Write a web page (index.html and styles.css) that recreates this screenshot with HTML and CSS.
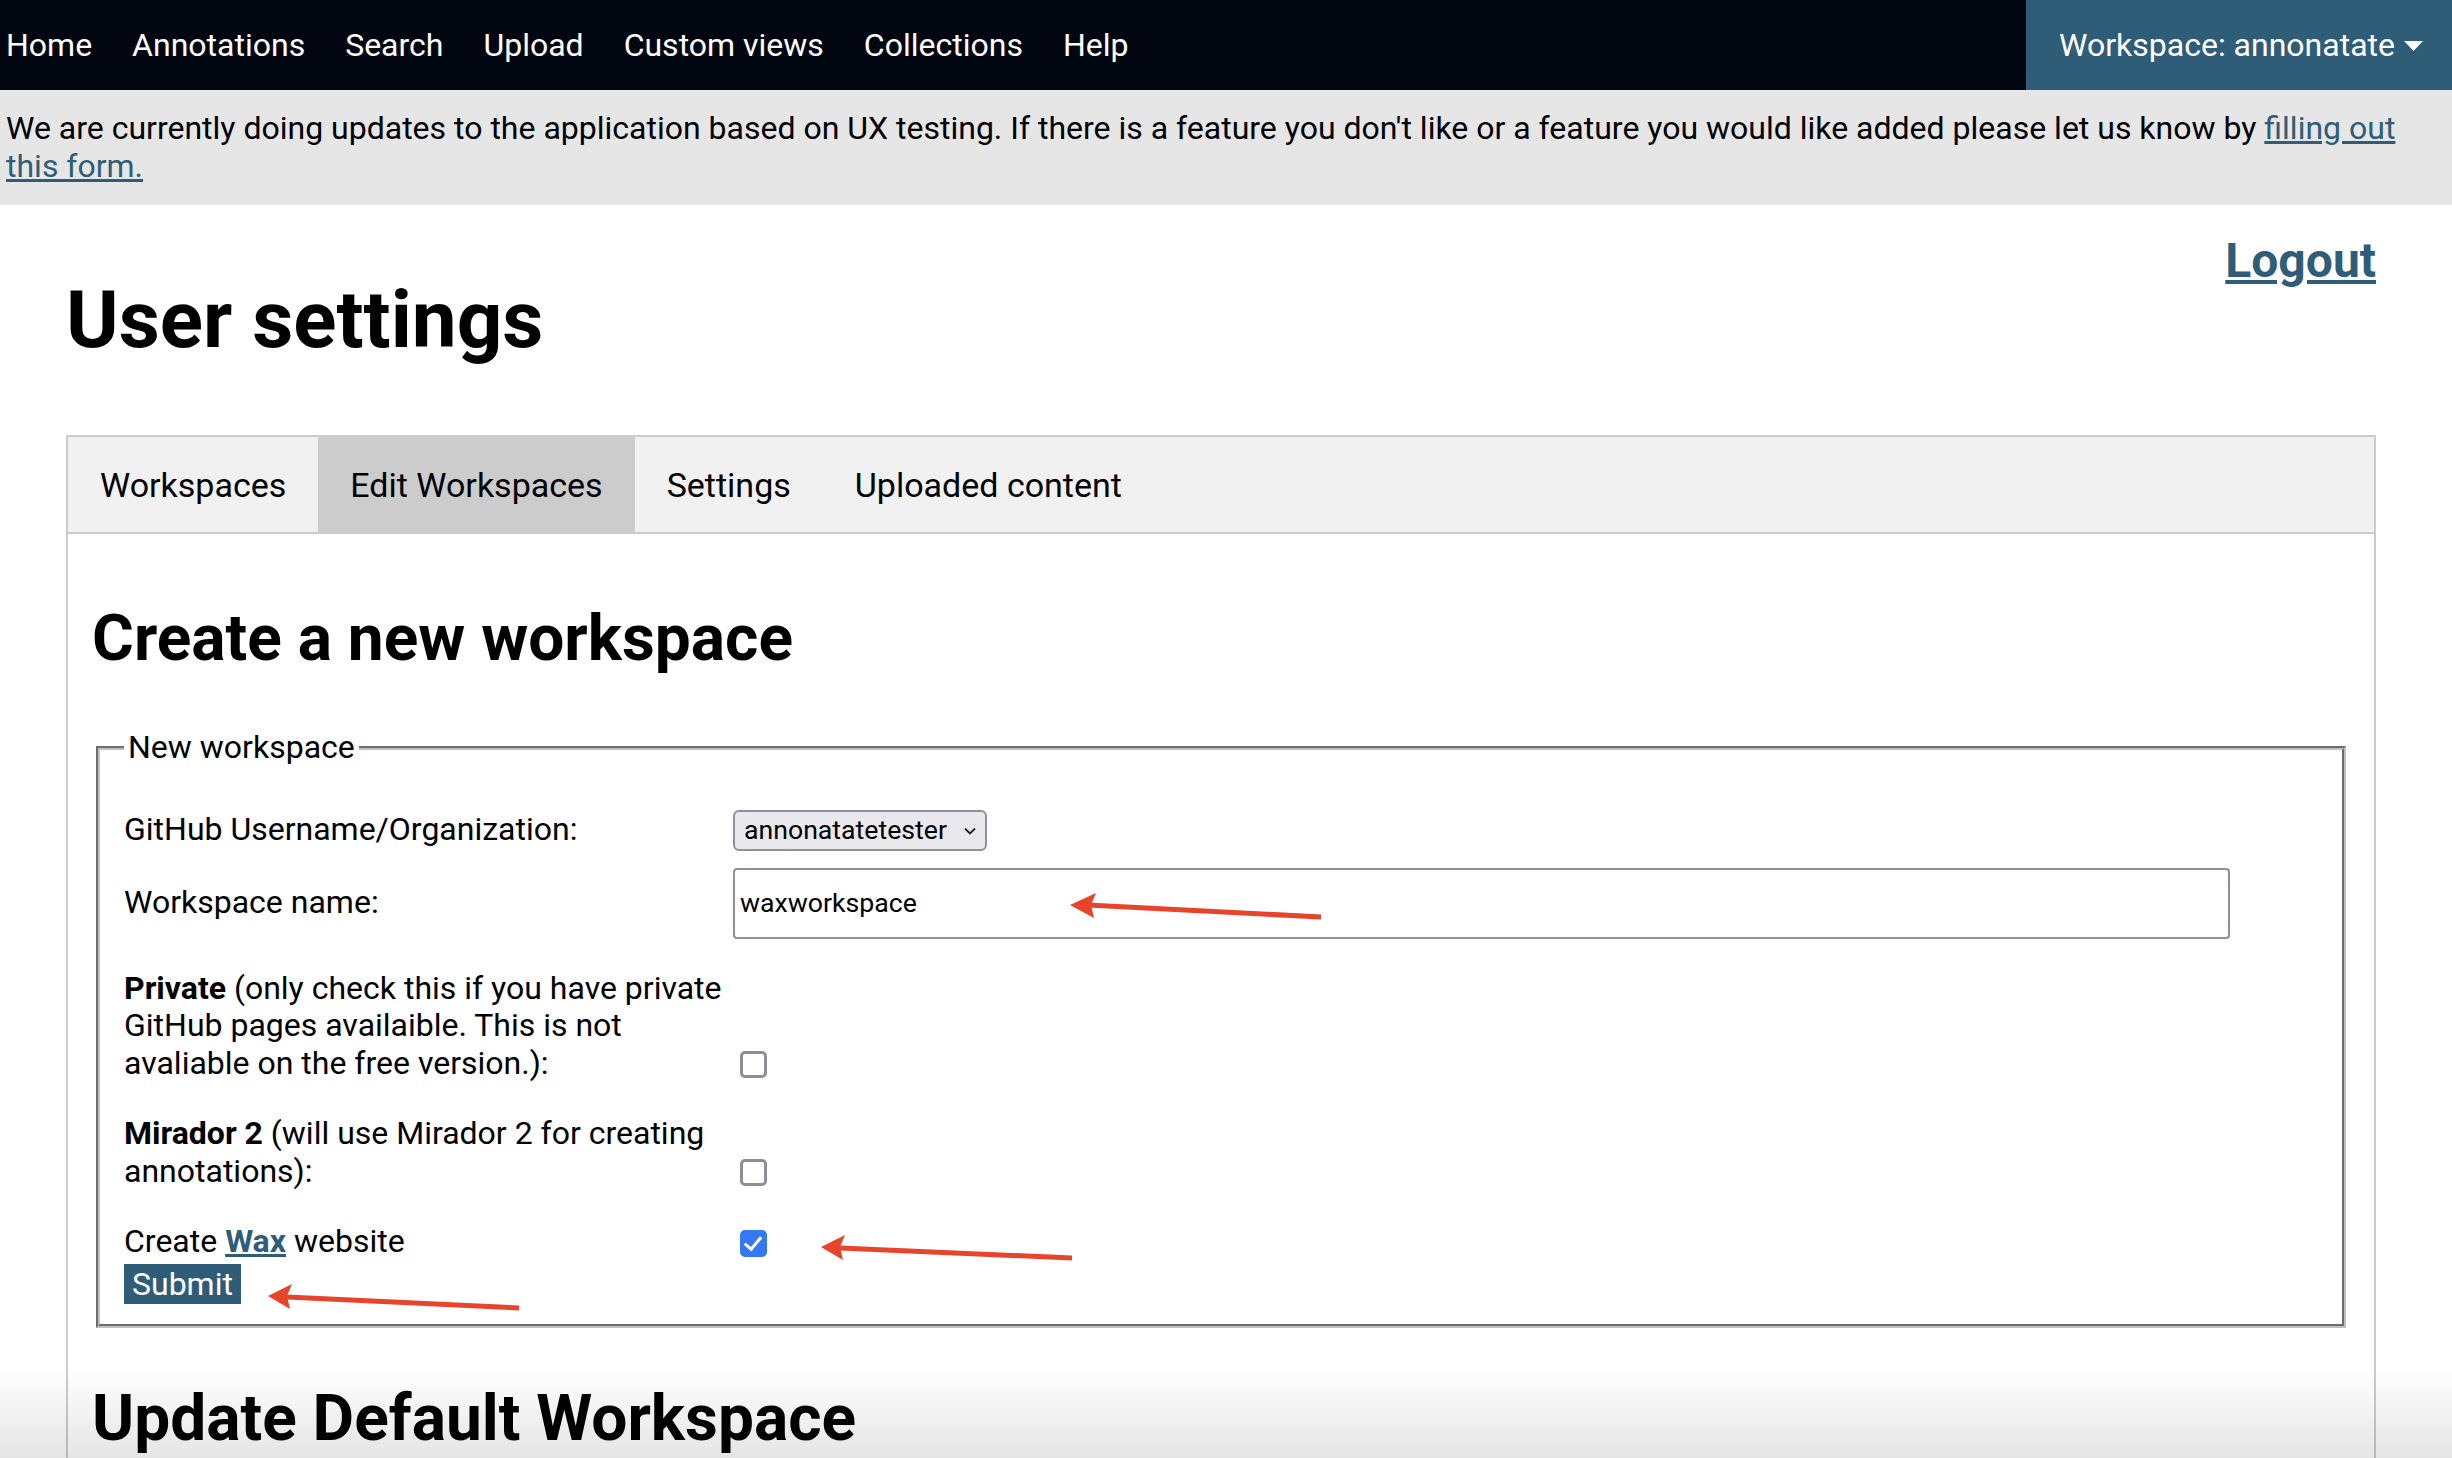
FILE: index.html
```html
<!DOCTYPE html>
<html lang="en">
<head>
<meta charset="utf-8">
<title>User settings</title>
<link rel="stylesheet" href="styles.css">
</head>
<body>
<nav class="topnav">
  <div class="nav-links">
    <a href="#">Home</a>
    <a href="#">Annotations</a>
    <a href="#">Search</a>
    <a href="#">Upload</a>
    <a href="#">Custom views</a>
    <a href="#">Collections</a>
    <a href="#">Help</a>
  </div>
  <div class="workspace-menu">
    <span>Workspace: annonatate</span>
    <svg class="caret" width="19" height="10" viewBox="0 0 19 10"><polygon points="0,0 19,0 9.5,10" fill="#fff"/></svg>
  </div>
</nav>
<div class="banner">We are currently doing updates to the application based on UX testing. If there is a feature you don't like or a feature you would like added please let us know by <a href="#">filling out this form.</a></div>

<main class="page">
  <div class="page-header">
    <h1>User settings</h1>
    <a href="#" class="logout">Logout</a>
  </div>

  <div class="tabs">
    <button class="tab">Workspaces</button>
    <button class="tab active">Edit Workspaces</button>
    <button class="tab">Settings</button>
    <button class="tab">Uploaded content</button>
  </div>

  <div class="tab-content">
    <h2 class="first">Create a new workspace</h2>
    <form>
      <fieldset class="new-ws">
        <legend>New workspace</legend>
        <div class="row row-first">
          <label class="lbl">GitHub Username/Organization:</label>
          <span class="select-wrap">
            <select class="select"><option>annonatatetester</option></select>
            <svg class="chev" width="12" height="8" viewBox="0 0 12 8"><polyline points="1,1.5 6,6.5 11,1.5" fill="none" stroke="#222" stroke-width="1.8"/></svg>
          </span>
        </div>
        <div class="row row-name">
          <label class="lbl">Workspace name:</label>
          <input class="text-input" type="text" value="waxworkspace">
        </div>
        <div class="row row-check row-private">
          <label class="lbl"><b>Private</b> (only check this if you have private GitHub pages availaible. This is not avaliable on the free version.):</label>
          <input class="check" type="checkbox">
        </div>
        <div class="row row-check">
          <label class="lbl"><b>Mirador 2</b> (will use Mirador 2 for creating annotations):</label>
          <input class="check" type="checkbox">
        </div>
        <div class="row row-check">
          <label class="lbl">Create <a href="#" class="wax">Wax</a> website</label>
          <input class="check" type="checkbox" checked>
        </div>
        <button type="button" class="submit">Submit</button>
      </fieldset>
    </form>
    <h2 class="second">Update Default Workspace</h2>
  </div>
</main>

<svg class="annotations" width="2452" height="1458" viewBox="0 0 2452 1458">
  <g stroke="#e8442c" stroke-width="5" stroke-linecap="butt" fill="none">
    <line x1="1321" y1="917" x2="1088" y2="905"/>
    <line x1="1072" y1="1258" x2="840" y2="1248"/>
    <line x1="519" y1="1308" x2="287" y2="1297"/>
  </g>
  <g fill="#e8442c">
    <polygon points="1070,905 1096,893 1091,905 1094,918"/>
    <polygon points="821,1247 845,1235 840,1247 843,1260"/>
    <polygon points="268,1296 292,1284 287,1296 290,1309"/>
  </g>
</svg>
<div class="bottom-fade"></div>
</body>
</html>
```

FILE: styles.css
```css
* { box-sizing: border-box; }

html, body {
  margin: 0;
  padding: 0;
}

body {
  font-family: Roboto, "Liberation Sans", Arial, sans-serif;
  font-size: 32px;
  color: #000;
  background: #fff;
  position: relative;
  min-height: 1458px;
  overflow: hidden;
}

a { color: #2f5d77; }

/* top navigation */
.topnav {
  display: flex;
  justify-content: space-between;
  align-items: stretch;
  height: 90px;
  background: #020610;
}

.nav-links {
  display: flex;
  align-items: center;
  gap: 40px;
  padding-left: 6px;
}

.nav-links a {
  color: #fff;
  text-decoration: none;
  font-size: 32px;
}

.workspace-menu {
  display: flex;
  align-items: center;
  gap: 9px;
  background: #2f5d77;
  color: #fff;
  padding: 0 29px 0 33px;
  font-size: 32px;
}

.caret { display: block; margin-top: 2px; }

/* banner */
.banner {
  background: #e6e6e6;
  padding: 19px 6px 20px 6px;
  line-height: 38px;
  font-size: 32px;
}

/* page */
.page {
  padding: 0 76px 0 66px;
}

.page-header {
  display: flex;
  justify-content: space-between;
  align-items: flex-start;
}

h1 {
  margin: 68px 0 0 0;
  font-size: 80px;
  line-height: 94px;
  font-weight: 700;
}

.logout {
  margin-top: 28px;
  font-size: 48px;
  line-height: 56px;
  font-weight: 700;
  color: #2f5d77;
}

/* tabs */
.tabs {
  margin-top: 68px;
  display: flex;
  background: #f1f1f1;
  border: 2px solid #ccc;
}

.tab {
  font-family: Roboto, "Liberation Sans", Arial, sans-serif;
  font-size: 34px;
  line-height: 40px;
  padding: 28px 32px 27px 32px;
  border: none;
  background: transparent;
  color: #000;
}

.tab.active { background: #ccc; }

.tab-content {
  border: 2px solid #ccc;
  border-top: none;
  padding: 12px 24px;
  min-height: 1000px;
}

h2 {
  font-size: 64px;
  line-height: 75px;
  font-weight: 700;
  margin: 53px 0;
}

h2.first { margin-top: 55px; }

/* fieldset */
form { margin: 0; }

.new-ws {
  margin: 0 4px;
  border: 4px groove #c0c0c0;
  padding: 11px 24px 20px 24px;
}

.new-ws legend {
  padding: 0 4px;
  font-size: 32px;
  line-height: 37.5px;
}

.row {
  display: flex;
  align-items: center;
  line-height: 37.5px;
}

.row-first { margin-top: 32px; }
.row-name { margin-top: 17px; }
.row-check { align-items: flex-end; margin-top: 33px; }
.row-private { margin-top: 31px; }

.lbl {
  width: 608px;
  flex: none;
}

.wax {
  font-weight: 700;
}

.select-wrap {
  position: relative;
  display: inline-block;
  margin-left: 1px;
}

.select {
  appearance: none;
  -webkit-appearance: none;
  display: block;
  width: 254px;
  height: 41px;
  padding: 0 0 0 9px;
  font-family: Roboto, "Liberation Sans", Arial, sans-serif;
  font-size: 26.67px;
  color: #000;
  background: #e9e9ed;
  border: 2px solid #8f8f9d;
  border-radius: 6px;
}

.chev {
  position: absolute;
  right: 11px;
  top: 17px;
}

.text-input {
  margin-left: 1px;
  width: 1497px;
  height: 71px;
  padding: 0 5px;
  font-family: Roboto, "Liberation Sans", Arial, sans-serif;
  font-size: 26.67px;
  color: #000;
  border: 2px solid #8f8f9d;
  border-radius: 4px;
  background: #fff;
}

.check {
  appearance: none;
  -webkit-appearance: none;
  position: relative;
  width: 27px;
  height: 27px;
  margin: 0 0 4px 8px;
  border: 3.5px solid #8e8d99;
  border-radius: 5px;
  background: #fff;
  flex: none;
}

.check:checked {
  background: #3478f6;
  border-color: #3478f6;
}

.check:checked::after {
  content: "";
  position: absolute;
  left: 5px;
  top: 0px;
  width: 7px;
  height: 14px;
  border-right: 3.5px solid #fff;
  border-bottom: 3.5px solid #fff;
  transform: rotate(40deg);
}

.submit {
  display: block;
  margin-top: 3px;
  padding: 1px 8px;
  font-family: Roboto, "Liberation Sans", Arial, sans-serif;
  font-size: 32px;
  line-height: 38px;
  color: #fff;
  background: #2f5d77;
  border: none;
  border-radius: 0;
}

/* overlays */
.annotations {
  position: absolute;
  top: 0;
  left: 0;
  pointer-events: none;
}

.bottom-fade {
  position: fixed;
  left: 0;
  right: 0;
  bottom: 0;
  height: 90px;
  background: linear-gradient(to bottom, rgba(0,0,0,0), rgba(0,0,0,0.1));
  pointer-events: none;
}
```
